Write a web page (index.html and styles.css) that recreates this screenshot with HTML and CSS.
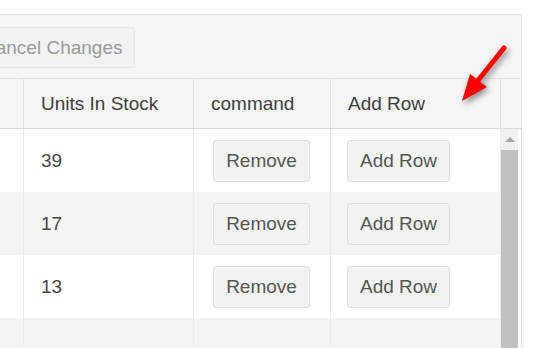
FILE: index.html
```html
<!DOCTYPE html>
<html lang="en">
<head>
    <meta charset="UTF-8">
    <title>Grid - Add Row</title>
    <link rel="stylesheet" href="styles.css">
</head>
<body>
    <div class="grid">
        <div class="toolbar">
            <button class="btn">Cancel Changes</button>
        </div>
        <div class="grid-header">
            <table>
                <colgroup>
                    <col class="c1"><col class="c2"><col class="c3"><col class="c4"><col class="c5">
                </colgroup>
                <tr>
                    <th></th>
                    <th>Units In Stock</th>
                    <th>command</th>
                    <th>Add Row</th>
                    <th></th>
                </tr>
            </table>
        </div>
        <div class="grid-content">
            <table class="rows">
                <colgroup>
                    <col class="c1"><col class="c2"><col class="c3"><col class="c4">
                </colgroup>
                <tr>
                    <td></td>
                    <td>39</td>
                    <td class="cmd"><button class="btn">Remove</button></td>
                    <td class="add"><button class="btn">Add Row</button></td>
                </tr>
                <tr class="alt">
                    <td></td>
                    <td>17</td>
                    <td class="cmd"><button class="btn">Remove</button></td>
                    <td class="add"><button class="btn">Add Row</button></td>
                </tr>
                <tr>
                    <td></td>
                    <td>13</td>
                    <td class="cmd"><button class="btn">Remove</button></td>
                    <td class="add"><button class="btn">Add Row</button></td>
                </tr>
                <tr class="alt empty">
                    <td></td><td></td><td></td><td></td>
                </tr>
            </table>
            <div class="scrollbar">
                <div class="scroll-up"><span class="tri"></span></div>
                <div class="thumb"></div>
            </div>
        </div>
    </div>

    <!-- red callout arrow -->
    <svg class="pointer" width="542" height="348" viewBox="0 0 542 348">
        <line x1="504" y1="48" x2="476" y2="83" stroke="#ff0000" stroke-width="5" stroke-linecap="round"/>
        <polygon points="462,101 470,74 487,87" fill="#ff0000"/>
    </svg>
</body>
</html>
```

FILE: styles.css
```css
body {
    margin: 0;
    padding: 0;
    background-color: #ffffff;
    font-family: "Liberation Sans", Arial, sans-serif;
    font-size: 19px;
    overflow: hidden;
    height: 348px;
}
.grid {
    width: 560px;
    margin: 14px 0 0 -40px;
    border: 1px solid #e3e3e3;
    background-color: #ffffff;
}
.toolbar {
    height: 64px;
    padding: 12px 0 0 8px;
    box-sizing: border-box;
    background-color: #f5f5f5;
    border-bottom: 1px solid #e3e3e3;
}
.btn {
    height: 42px;
    padding: 0 12px;
    font-family: inherit;
    font-size: 19px;
    color: #555555;
    background-color: #f2f2f2;
    border: 1px solid #e0e0e0;
    border-radius: 3px;
    box-sizing: border-box;
    vertical-align: middle;
}
.toolbar .btn {
    height: 41px;
    color: #9a9a9a;
    border-color: #e6e6e6;
}
table {
    border-collapse: separate;
    border-spacing: 0;
    table-layout: fixed;
}
.c1 { width: 62px; }
.c2 { width: 170px; }
.c3 { width: 137px; }
.c4 { width: 170px; }
.c5 { width: 21px; }
.grid-header {
    background-color: #f5f5f5;
    border-bottom: 1px solid #dbdbdb;
}
.grid-header table {
    width: 560px;
}
.grid-header th {
    height: 49px;
    padding: 0 16px 0 17px;
    text-align: left;
    font-weight: normal;
    color: #404040;
    border-left: 1px solid #e2e2e2;
    white-space: nowrap;
    overflow: hidden;
}
.grid-header th:first-child {
    border-left: none;
}
.grid-header th:last-child {
    padding: 0;
}
.grid-content {
    display: flex;
    align-items: flex-start;
    height: 300px;
    overflow: hidden;
}
.rows {
    width: 539px;
    flex: none;
}
.rows td {
    height: 63px;
    padding: 0 16px 0 17px;
    color: #464646;
    border-left: 1px solid #ebebeb;
    white-space: nowrap;
}
.rows td:first-child {
    border-left: none;
}
.rows td.cmd {
    padding: 0 1px 0 0;
    text-align: center;
}
.rows td.add {
    padding-left: 16px;
}
.rows tr.alt td {
    background-color: #f4f4f4;
}
.scrollbar {
    flex: none;
    align-self: stretch;
    width: 17px;
    border-left: 1px solid #ebebeb;
    border-right: 3px solid #ffffff;
    background-color: #f1f1f1;
}
.scroll-up {
    height: 21px;
    display: flex;
    justify-content: center;
    align-items: center;
}
.tri {
    width: 0;
    height: 0;
    border-left: 5px solid transparent;
    border-right: 5px solid transparent;
    border-bottom: 5px solid #a3a3a3;
}
.thumb {
    height: 260px;
    background-color: #c1c1c1;
}
.pointer {
    position: absolute;
    left: 0;
    top: 0;
    filter: drop-shadow(2px 3px 3px rgba(0, 0, 0, 0.45));
}
```
